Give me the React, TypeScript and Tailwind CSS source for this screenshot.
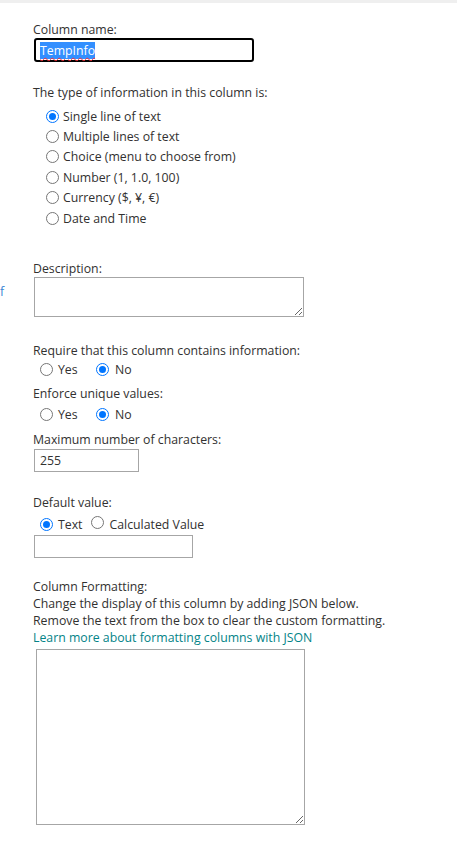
import React from "react";

const font = { fontFamily: '"Open Sans", "Noto Sans", sans-serif' };

const Radio = ({ checked }: { checked?: boolean }) => (
  <span
    className={`inline-flex h-[13px] w-[13px] shrink-0 items-center justify-center rounded-full border ${
      checked ? "border-[#0075ff]" : "border-[#767676]"
    } bg-white`}
  >
    {checked && <span className="h-[7px] w-[7px] rounded-full bg-[#0075ff]" />}
  </span>
);

const typeOptions = [
  "Single line of text",
  "Multiple lines of text",
  "Choice (menu to choose from)",
  "Number (1, 1.0, 100)",
  "Currency ($, ¥, €)",
  "Date and Time",
];

const YesNo = ({ className = "" }: { className?: string }) => (
  <div className={`flex items-center pl-[7px] ${className}`}>
    <Radio />
    <span className="ml-[5px] w-[38px]">Yes</span>
    <Radio checked />
    <span className="ml-[6px]">No</span>
  </div>
);

export default function App() {
  return (
    <div
      className="relative min-h-[852px] w-[457px] overflow-hidden bg-white text-[12.3px] leading-[17px] text-[#323130]"
      style={font}
    >
      <div className="h-[3px] bg-[#efefef]" />

      {/* edge of the left column's text */}
      <span className="absolute left-0 top-[283px] text-[#3a86d4]">f</span>

      <div className="pl-[33px]">
        {/* Column name */}
        <div className="mt-[19px] h-[16px] leading-[16px]">Column name:</div>
        <div className="ml-[1px] flex h-[24px] w-[220px] items-center rounded-[3px] border-2 border-black px-[4px]">
          <span className="bg-[#338fff] text-white underline decoration-red-500 decoration-wavy decoration-1 underline-offset-2">
            TempInfo
          </span>
        </div>

        {/* Type of information */}
        <div className="mt-[22px]">The type of information in this column is:</div>
        <div className="mt-[5px] pl-[13px]">
          {typeOptions.map((opt, i) => (
            <div key={opt} className="flex h-[20.4px] items-center">
              <Radio checked={i === 0} />
              <span className="ml-[4px]">{opt}</span>
            </div>
          ))}
        </div>

        {/* Description */}
        <div className="mt-[32px]">Description:</div>
        <textarea className="ml-[1px] block h-[40px] w-[270px] border border-[#a6a6a6] outline-none" />

        {/* Required / unique */}
        <div className="mt-[25px]">Require that this column contains information:</div>
        <YesNo className="h-[21px]" />
        <div className="mt-[5px]">Enforce unique values:</div>
        <YesNo className="mt-[2px] h-[20px]" />
        <div className="mt-[7px]">Maximum number of characters:</div>
        <input
          defaultValue="255"
          className="ml-[1px] mt-[1px] block h-[23px] w-[105px] border border-[#a6a6a6] px-[5px] text-[12.3px] text-[#323130] outline-none"
        />

        {/* Default value */}
        <div className="mt-[22px]">Default value:</div>
        <div className="mt-[3px] flex h-[20px] items-center pl-[7px]">
          <Radio checked />
          <span className="ml-[5px]">Text</span>
          <span className="ml-[8px]">
            <Radio />
          </span>
          <span className="ml-[6px]">Calculated Value</span>
        </div>
        <input className="ml-[1px] mt-[1px] block h-[23px] w-[159px] border border-[#a6a6a6] outline-none" />

        {/* Column formatting */}
        <div className="mt-[20px]">Column Formatting:</div>
        <div>Change the display of this column by adding JSON below.</div>
        <div>Remove the text from the box to clear the custom formatting.</div>
        <div className="text-[#038387]">Learn more about formatting columns with JSON</div>
        <textarea className="ml-[3px] mt-[3px] block h-[176px] w-[269px] border border-[#a6a6a6] outline-none" />
      </div>
    </div>
  );
}
